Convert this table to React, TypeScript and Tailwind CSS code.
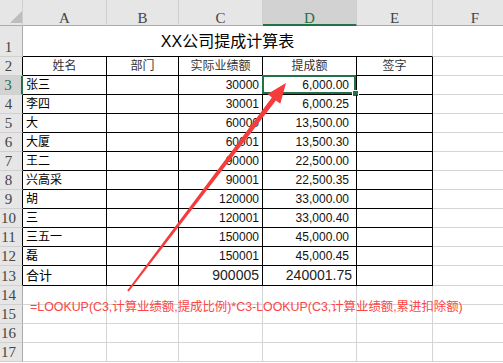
import React from "react";

const CJK = "font-['Liberation_Sans','Noto_Sans_CJK_SC',sans-serif]";
const HDR = "font-['Liberation_Serif','Noto_Sans_CJK_SC',serif]";

type Row = { name: string; c: string; d: string };
const data: Row[] = [
  { name: "张三", c: "30000", d: "6,000.00" },
  { name: "李四", c: "30001", d: "6,000.25" },
  { name: "大", c: "60000", d: "13,500.00" },
  { name: "大厦", c: "60001", d: "13,500.30" },
  { name: "王二", c: "90000", d: "22,500.00" },
  { name: "兴高采", c: "90001", d: "22,500.35" },
  { name: "胡", c: "120000", d: "33,000.00" },
  { name: "三", c: "120001", d: "33,000.40" },
  { name: "三五一", c: "150000", d: "45,000.00" },
  { name: "磊", c: "150001", d: "45,000.45" },
];

function RowHead({ n, table, sel }: { n: number; table?: boolean; sel?: boolean }) {
  const base = `flex items-end justify-center pr-[5px] pb-[0px] text-[15px] leading-[18px] ${HDR} border-b border-b-[#d0d0d0]`;
  if (sel)
    return <div className={`${base} bg-[#d2d2d2] text-[#217346] border-r-2 border-r-[#217346]`}>{n}</div>;
  if (table) return <div className={`${base} bg-[#e6e6e6] text-[#444] border-r border-r-black`}>{n}</div>;
  return <div className={`${base} bg-[#e6e6e6] text-[#444] border-r border-r-[#ababab]`}>{n}</div>;
}

const tcell = "border-r border-b border-black flex items-center overflow-hidden whitespace-nowrap";
const gcell = "border-r border-b border-[#d4d4d4]";

export default function App() {
  return (
    <div className={`relative w-[503px] h-[363px] overflow-hidden bg-white ${CJK} text-black`}>
      <div className="grid grid-cols-[23px_84px_72px_84px_94px_76px_85px] grid-rows-[26px_31px_repeat(11,19px)_20px_repeat(4,19px)]">
        {/* header row */}
        <div className="relative bg-[#e6e6e6] border-r border-b border-r-[#cfcfcf] border-b-[#ababab]">
          <svg className="absolute left-[10px] top-[11px]" width="12" height="12" viewBox="0 0 12 12">
            <polygon points="12,0 12,12 0,12" fill="#bdbdbd" />
          </svg>
        </div>
        {["A", "B", "C", "D", "E", "F"].map((l) =>
          l === "D" ? (
            <div
              key={l}
              className={`flex items-start justify-center pt-[11px] bg-[#d2d2d2] text-[#217346] border-r border-r-[#cfcfcf] border-b-2 border-b-[#217346] text-[15px] leading-[15px] ${HDR}`}
            >
              {l}
            </div>
          ) : (
            <div
              key={l}
              className={`flex items-start justify-center pt-[11px] bg-[#e6e6e6] text-[#444] border-r border-r-[#cfcfcf] border-b border-b-[#ababab] text-[15px] leading-[15px] ${HDR}`}
            >
              {l}
            </div>
          )
        )}

        {/* row 1 */}
        <RowHead n={1} />
        <div className="col-span-5 flex items-end justify-center pb-[4px] border-b border-b-black border-r border-r-[#d4d4d4] text-[16px] leading-[20px]">
          XX公司提成计算表
        </div>
        <div className={gcell} />

        {/* row 2 */}
        <RowHead n={2} table />
        {["姓名", "部门", "实际业绩额", "提成额", "签字"].map((t) => (
          <div key={t} className={`${tcell} justify-center text-[12px] text-[#333]`}>
            {t}
          </div>
        ))}
        <div className={gcell} />

        {data.map((r, i) => (
          <React.Fragment key={i}>
            <RowHead n={i + 3} table sel={i === 0} />
            <div className={`${tcell} pl-[3px] text-[12px]`}>{r.name}</div>
            <div className={tcell} />
            <div className={`${tcell} justify-end pr-[3px] text-[12px] text-[#111]`}>{r.c}</div>
            <div className={`${tcell} justify-end pr-[7px] text-[12px] text-[#111] relative overflow-visible`}>
              {r.d}
              {i === 0 && (
                <div className="absolute left-[-1px] top-[-1px] right-0 bottom-0 border-2 border-[#217346]">
                  <div className="absolute right-[-5px] bottom-[-5px] w-[7px] h-[7px] bg-[#217346] border border-white" />
                </div>
              )}
            </div>
            <div className={tcell} />
            <div className={gcell} />
          </React.Fragment>
        ))}

        {/* row 13 */}
        <RowHead n={13} table />
        <div className={`${tcell} pl-[3px] text-[13px]`}>合计</div>
        <div className={tcell} />
        <div className={`${tcell} justify-end pr-[3px] text-[14px] text-[#222]`}>900005</div>
        <div className={`${tcell} justify-end pr-[4px] text-[14px] text-[#222]`}>240001.75</div>
        <div className={tcell} />
        <div className={gcell} />

        {[14, 15, 16, 17].map((n) => (
          <React.Fragment key={n}>
            <RowHead n={n} />
            <div className={gcell} />
            <div className={gcell} />
            <div className={gcell} />
            <div className={gcell} />
            <div className={gcell} />
            <div className={gcell} />
          </React.Fragment>
        ))}
      </div>

      {/* annotation arrow */}
      <svg className="absolute left-0 top-0 pointer-events-none" width="503" height="363" viewBox="0 0 503 363">
        <polygon
          points="127.2,290.4 271.9,97.4 267.5,94.1 286,83 280.3,103.7 275.9,100.4 128.8,291.6"
          fill="#f43c3c"
        />
      </svg>

      {/* formula annotation */}
      <div className="absolute left-[30px] top-[300px] text-[12.4px] leading-[15px] text-[#ff4545] whitespace-nowrap">
        =LOOKUP(C3,计算业绩额,提成比例)*C3-LOOKUP(C3,计算业绩额,累进扣除额)
      </div>
    </div>
  );
}
